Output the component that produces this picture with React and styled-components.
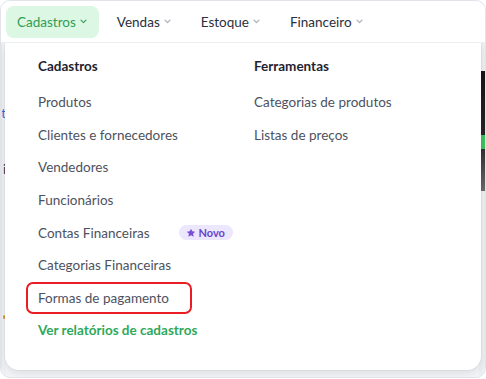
import styled, { createGlobalStyle } from 'styled-components';

const GlobalStyle = createGlobalStyle`
  * { box-sizing: border-box; }
  body {
    margin: 0;
    background: #ffffff;
    font-family: Lato, "Noto Sans", sans-serif;
    -webkit-font-smoothing: antialiased;
  }
`;

const navItems = [
  { title: 'Cadastros', active: true },
  { title: 'Vendas' },
  { title: 'Estoque' },
  { title: 'Financeiro' },
];

const cadastros = [
  { title: 'Produtos' },
  { title: 'Clientes e fornecedores' },
  { title: 'Vendedores' },
  { title: 'Funcionários' },
  { title: 'Contas Financeiras', badge: 'Novo' },
  { title: 'Categorias Financeiras' },
  { title: 'Formas de pagamento', marked: true },
];

const ferramentas = [
  { title: 'Categorias de produtos' },
  { title: 'Listas de preços' },
];

function Chevron({ color }) {
  return (
    <svg width="7" height="5" viewBox="0 0 7 5" fill="none">
      <path d="M1 1.2l2.5 2.5 2.5-2.5" stroke={color} strokeWidth="1.1" strokeLinecap="round" strokeLinejoin="round" />
    </svg>
  );
}

function Star() {
  return (
    <svg width="10" height="10" viewBox="0 0 24 24">
      <path
        d="M12 1.5l3.1 6.5 7 .9-5.2 4.9 1.4 7L12 17.3l-6.3 3.5 1.4-7L1.9 8.9l7-.9z"
        fill="#7b4fd6"
      />
    </svg>
  );
}

function App() {
  return (
    <>
      <GlobalStyle />
      <Frame>
        <NavBar>
          {navItems.map(item => (
            <NavItem key={item.title} $active={item.active}>
              {item.title}
              <Chevron color={item.active ? '#2f9e55' : '#a3a8b3'} />
            </NavItem>
          ))}
        </NavBar>
        <Body>
          <SideStrip>
            <Fragment $top={62} $color="#2c6fd6">t</Fragment>
            <Fragment $top={118} $color="#2d3340">i</Fragment>
            <Dot />
          </SideStrip>
          <MainArea />
          <RightStrip>
            <Banner>
              <BannerGreen />
            </Banner>
          </RightStrip>

          <Menu>
            <Column>
              <Heading>Cadastros</Heading>
              {cadastros.map(item => (
                <Item key={item.title} $marked={item.marked}>
                  {item.title}
                  {item.badge && (
                    <Badge>
                      <Star />
                      {item.badge}
                    </Badge>
                  )}
                </Item>
              ))}
              <ReportLink>Ver relatórios de cadastros</ReportLink>
            </Column>
            <Column>
              <Heading>Ferramentas</Heading>
              {ferramentas.map(item => (
                <Item key={item.title}>{item.title}</Item>
              ))}
            </Column>
          </Menu>
        </Body>
      </Frame>
    </>
  );
}

const Frame = styled.div`
  width: 486px;
  height: 378px;
  border: 1px solid #e1e3e8;
  border-radius: 10px;
  overflow: hidden;
  display: flex;
  flex-direction: column;
  background: #f6f7f9;
`;

const NavBar = styled.div`
  height: 42px;
  flex-shrink: 0;
  display: flex;
  align-items: center;
  gap: 7px;
  padding: 0 5px;
  background: #ffffff;
  border-bottom: 1px solid #eceef2;
  position: relative;
  z-index: 2;
`;

const NavItem = styled.div`
  height: 32px;
  display: flex;
  align-items: center;
  gap: 4px;
  padding: 0 12px 0 11px;
  border-radius: 8px;
  font-size: 13.5px;
  color: ${p => (p.$active ? '#2f9e55' : '#2b303b')};
  background: ${p => (p.$active ? '#dcf7e3' : 'transparent')};
`;

const Body = styled.div`
  flex: 1;
  display: flex;
  position: relative;
`;

const SideStrip = styled.div`
  width: 5px;
  position: relative;
  background: #f1f2f5;
  border-left: 1px solid #e6e8ec;
  overflow: hidden;
`;

const Fragment = styled.span`
  position: absolute;
  top: ${p => p.$top}px;
  right: 0;
  font-size: 13px;
  color: ${p => p.$color};
`;

const Dot = styled.span`
  position: absolute;
  top: 272px;
  right: 0;
  width: 3px;
  height: 4px;
  border-radius: 2px;
  background: #e09a3a;
`;

const MainArea = styled.div`
  flex: 1;
`;

const RightStrip = styled.div`
  width: 6px;
  padding-top: 28px;
  background: #eef0f3;
`;

const Banner = styled.div`
  height: 120px;
  background: linear-gradient(180deg, #1a1214 0%, #2a2628 60%, #6d6b6e 100%);
  position: relative;
`;

const BannerGreen = styled.div`
  position: absolute;
  top: 64px;
  left: 1px;
  width: 5px;
  height: 14px;
  background: #3bc45e;
`;

const Menu = styled.div`
  position: absolute;
  top: -1px;
  left: 4px;
  right: 4px;
  height: 328px;
  z-index: 1;
  background: #ffffff;
  border-radius: 0 0 14px 14px;
  box-shadow: 0 4px 10px rgba(30, 40, 60, 0.12), 0 0 0 1px rgba(30, 40, 60, 0.04);
  display: grid;
  grid-template-columns: 216px 1fr;
  padding: 15px 0 0 33px;
`;

const Column = styled.div`
  display: flex;
  flex-direction: column;
  align-items: flex-start;
`;

const Heading = styled.div`
  font-size: 13.5px;
  font-weight: 700;
  color: #1f2330;
  line-height: 18px;
  margin-bottom: 11px;
`;

const Item = styled.div`
  height: 32.6px;
  display: flex;
  align-items: center;
  margin-left: -12px;
  padding: 0 21px 0 10px;
  border: 2px solid ${p => (p.$marked ? '#ea1c24' : 'transparent')};
  border-radius: 7px;
  font-size: 13.5px;
  color: #4d5260;
  white-space: nowrap;
`;

const Badge = styled.span`
  display: inline-flex;
  align-items: center;
  gap: 3px;
  margin-left: 29px;
  height: 15px;
  padding: 0 8px 0 7px;
  border-radius: 8px;
  background: #ece7fd;
  color: #6a45c9;
  font-size: 11px;
  font-weight: 700;
`;

const ReportLink = styled.div`
  height: 32.6px;
  display: flex;
  align-items: center;
  font-size: 13.5px;
  font-weight: 700;
  color: #2fa85a;
`;

export default App;
